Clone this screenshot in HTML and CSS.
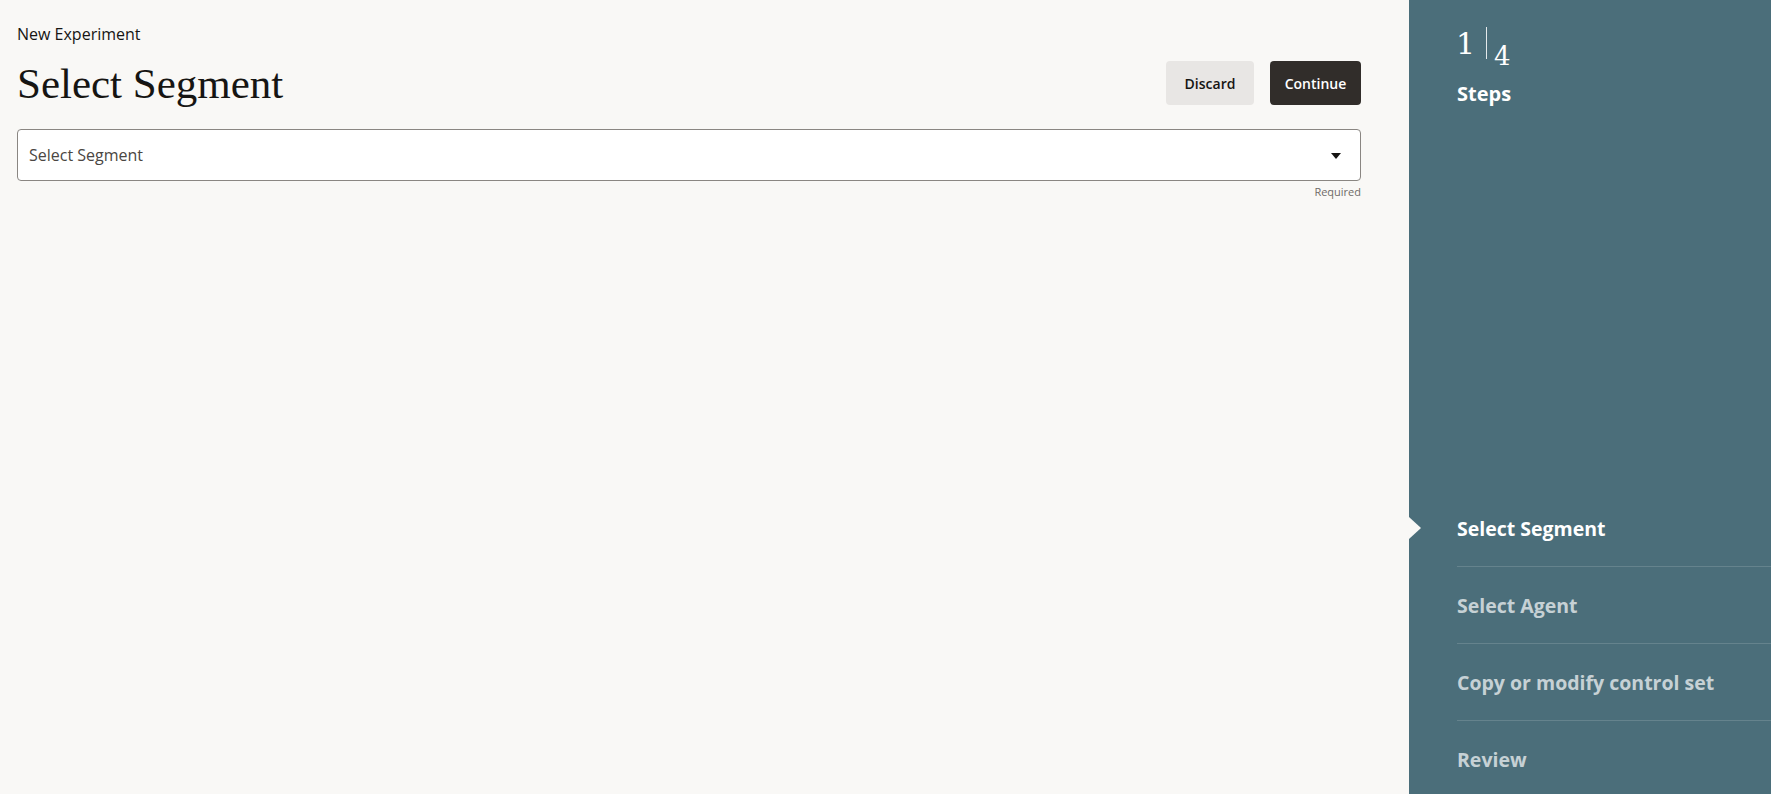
FILE: index.html
```html
<!DOCTYPE html>
<html lang="en">
<head>
<meta charset="utf-8">
<title>New Experiment</title>
<link rel="stylesheet" href="styles.css">
</head>
<body>
<div class="page">
  <main class="main">
    <div class="crumb">New Experiment</div>
    <div class="header">
      <h1 class="title">Select Segment</h1>
      <div class="actions">
        <button class="btn btn-secondary" type="button">Discard</button>
        <button class="btn btn-primary" type="button">Continue</button>
      </div>
    </div>
    <div class="field">
      <div class="select">
        <span class="select-value">Select Segment</span>
        <span class="select-arrow"></span>
      </div>
      <div class="hint">Required</div>
    </div>
  </main>
  <aside class="sidebar">
    <div class="counter">
      <span class="counter-current">1</span>
      <span class="counter-divider"></span>
      <span class="counter-total">4</span>
    </div>
    <div class="steps-label">Steps</div>
    <ol class="steps">
      <li class="step step-active">Select Segment</li>
      <li class="step">Select Agent</li>
      <li class="step">Copy or modify control set</li>
      <li class="step">Review</li>
    </ol>
  </aside>
</div>
</body>
</html>
```

FILE: styles.css
```css
* { box-sizing: border-box; }

html, body {
  margin: 0;
  padding: 0;
  height: 100%;
  overflow: hidden;
}

body {
  font-family: "Open Sans", "Noto Sans", sans-serif;
  background: #f9f8f6;
  color: #161513;
}

.page {
  display: flex;
  height: 794px;
  overflow: hidden;
}

.main {
  flex: 1;
  padding: 24px 48px 0 17px;
}

.crumb {
  font-size: 16px;
  line-height: 20px;
  color: #161513;
}

.header {
  display: flex;
  align-items: center;
  justify-content: space-between;
  margin-top: 16px;
}

.title {
  margin: 0;
  font-family: "Liberation Serif", "Times New Roman", serif;
  font-weight: 400;
  font-size: 43px;
  line-height: 48px;
  color: #161513;
}

.actions {
  display: flex;
  gap: 16px;
  margin-bottom: 2px;
}

.btn {
  height: 44px;
  border: none;
  border-radius: 4px;
  font-family: "Open Sans", "Noto Sans", sans-serif;
  font-size: 14px;
  font-weight: 600;
  padding: 0;
  cursor: pointer;
}

.btn-secondary {
  width: 88px;
  background: #e8e6e4;
  color: #161513;
}

.btn-primary {
  width: 91px;
  background: #312d2a;
  color: #ffffff;
}

.field {
  margin-top: 21px;
}

.select {
  display: flex;
  align-items: center;
  justify-content: space-between;
  height: 52px;
  background: #ffffff;
  border: 1px solid #8a8682;
  border-radius: 4px;
  padding: 0 19px 0 11px;
}

.select-value {
  font-size: 16px;
  color: #4a4642;
}

.select-arrow {
  width: 0;
  height: 0;
  border-left: 5.5px solid transparent;
  border-right: 5.5px solid transparent;
  border-top: 6px solid #161513;
  margin-top: 1px;
}

.hint {
  text-align: right;
  font-size: 11px;
  line-height: 14px;
  margin-top: 4px;
  color: #6f6b67;
}

.sidebar {
  width: 362px;
  flex: none;
  background: #4b6e7a;
  color: #ffffff;
  padding: 26px 0 0 48px;
  display: flex;
  flex-direction: column;
  overflow: hidden;
}

.counter {
  display: flex;
  align-items: flex-start;
  height: 54px;
  flex: none;
}

.counter-current {
  font-family: "DejaVu Serif", "Liberation Serif", serif;
  font-size: 30px;
  line-height: 36px;
  margin-left: -1px;
}

.counter-divider {
  width: 1px;
  height: 32px;
  margin: 1px 7px 0 11px;
  background: rgba(255, 255, 255, 0.85);
}

.counter-total {
  font-family: "DejaVu Serif", "Liberation Serif", serif;
  font-size: 26px;
  line-height: 32px;
  margin-top: 14px;
}

.steps-label {
  font-size: 20px;
  font-weight: 700;
  line-height: 28px;
  flex: none;
}

.steps {
  list-style: none;
  margin: 382px 0 0 0;
  padding: 0;
  flex: none;
}

.step {
  position: relative;
  font-size: 19.5px;
  font-weight: 700;
  line-height: 28px;
  padding: 25px 0 23px 0;
  color: rgba(255, 255, 255, 0.7);
}

.step + .step {
  border-top: 1px solid rgba(255, 255, 255, 0.15);
}

.step-active {
  color: #ffffff;
}

.step-active::before {
  content: "";
  position: absolute;
  left: -48px;
  top: 50%;
  margin-top: -11.5px;
  width: 0;
  height: 0;
  border-left: 12px solid #f9f8f6;
  border-top: 11.5px solid transparent;
  border-bottom: 11.5px solid transparent;
}
```
